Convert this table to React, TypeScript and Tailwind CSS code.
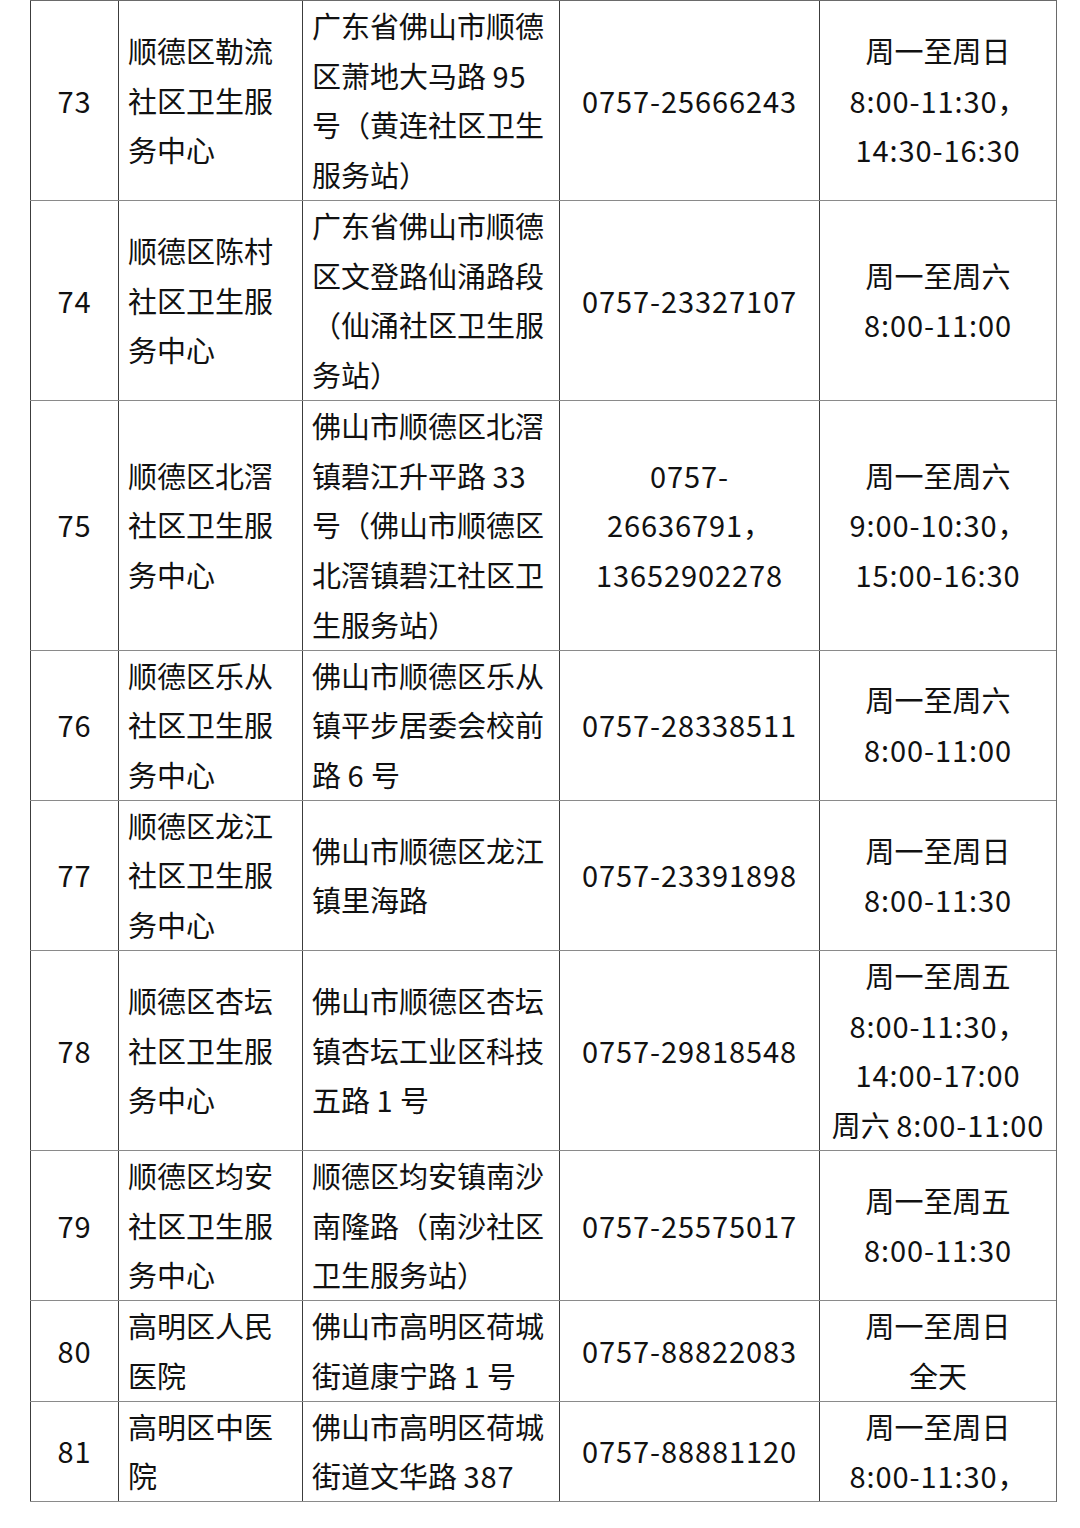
import React from "react";

type Row = {
  no: string;
  name: string[];
  addr: string[];
  phone: string[];
  hours: string[];
};

const rows: Row[] = [
  {
    no: "73",
    name: ["顺德区勒流", "社区卫生服", "务中心"],
    addr: ["广东省佛山市顺德", "区萧地大马路 95", "号（黄连社区卫生", "服务站）"],
    phone: ["0757-25666243"],
    hours: ["周一至周日", "8:00-11:30，", "14:30-16:30"],
  },
  {
    no: "74",
    name: ["顺德区陈村", "社区卫生服", "务中心"],
    addr: ["广东省佛山市顺德", "区文登路仙涌路段", "（仙涌社区卫生服", "务站）"],
    phone: ["0757-23327107"],
    hours: ["周一至周六", "8:00-11:00"],
  },
  {
    no: "75",
    name: ["顺德区北滘", "社区卫生服", "务中心"],
    addr: ["佛山市顺德区北滘", "镇碧江升平路 33", "号（佛山市顺德区", "北滘镇碧江社区卫", "生服务站）"],
    phone: ["0757-", "26636791，", "13652902278"],
    hours: ["周一至周六", "9:00-10:30，", "15:00-16:30"],
  },
  {
    no: "76",
    name: ["顺德区乐从", "社区卫生服", "务中心"],
    addr: ["佛山市顺德区乐从", "镇平步居委会校前", "路 6 号"],
    phone: ["0757-28338511"],
    hours: ["周一至周六", "8:00-11:00"],
  },
  {
    no: "77",
    name: ["顺德区龙江", "社区卫生服", "务中心"],
    addr: ["佛山市顺德区龙江", "镇里海路"],
    phone: ["0757-23391898"],
    hours: ["周一至周日", "8:00-11:30"],
  },
  {
    no: "78",
    name: ["顺德区杏坛", "社区卫生服", "务中心"],
    addr: ["佛山市顺德区杏坛", "镇杏坛工业区科技", "五路 1 号"],
    phone: ["0757-29818548"],
    hours: ["周一至周五", "8:00-11:30，", "14:00-17:00", "周六 8:00-11:00"],
  },
  {
    no: "79",
    name: ["顺德区均安", "社区卫生服", "务中心"],
    addr: ["顺德区均安镇南沙", "南隆路（南沙社区", "卫生服务站）"],
    phone: ["0757-25575017"],
    hours: ["周一至周五", "8:00-11:30"],
  },
  {
    no: "80",
    name: ["高明区人民", "医院"],
    addr: ["佛山市高明区荷城", "街道康宁路 1 号"],
    phone: ["0757-88822083"],
    hours: ["周一至周日", "全天"],
  },
  {
    no: "81",
    name: ["高明区中医", "院"],
    addr: ["佛山市高明区荷城", "街道文华路 387"],
    phone: ["0757-88881120"],
    hours: ["周一至周日", "8:00-11:30，"],
  },
];

function Text({ s }: { s: string }) {
  const parts = s.split(/([0-9:\-]+)/);
  return (
    <>
      {parts.map((p, i) =>
        /^[0-9:\-]+$/.test(p) ? (
          <span key={i} className="tracking-[0.9px]">
            {p}
          </span>
        ) : (
          <span key={i}>{p}</span>
        )
      )}
    </>
  );
}

function Lines({ lines, center }: { lines: string[]; center?: boolean }) {
  return (
    <div className={center ? "text-center" : "text-left"}>
      {lines.map((l, i) => (
        <div key={i} className="whitespace-pre leading-[49.73px]">
          <Text s={l} />
        </div>
      ))}
    </div>
  );
}

export default function App() {
  return (
    <div className="w-[1080px] h-[1528px] bg-white overflow-hidden">
      <div
        className="ml-[30px] w-[1027px] border-t border-r border-[#6a6a6a] text-[29px] text-[#111]"
        style={{ fontFamily: '"Noto Sans CJK SC", "Noto Sans", sans-serif' }}
      >
        {rows.map((r) => (
          <div
            key={r.no}
            className="grid grid-cols-[88px_184px_257px_260px_237px] border-b border-[#8a8a8a]"
          >
            <div className="border-l border-[#3c3c3c] flex items-center justify-center">
              <Lines lines={[r.no]} center />
            </div>
            <div className="border-l border-[#3c3c3c] flex items-center pl-[9px]">
              <Lines lines={r.name} />
            </div>
            <div className="border-l border-[#3c3c3c] flex items-center pl-[9px]">
              <Lines lines={r.addr} />
            </div>
            <div className="border-l border-[#3c3c3c] flex items-center justify-center">
              <Lines lines={r.phone} center />
            </div>
            <div className="border-l border-[#3c3c3c] flex items-center justify-center">
              <Lines lines={r.hours} center />
            </div>
          </div>
        ))}
      </div>
    </div>
  );
}
